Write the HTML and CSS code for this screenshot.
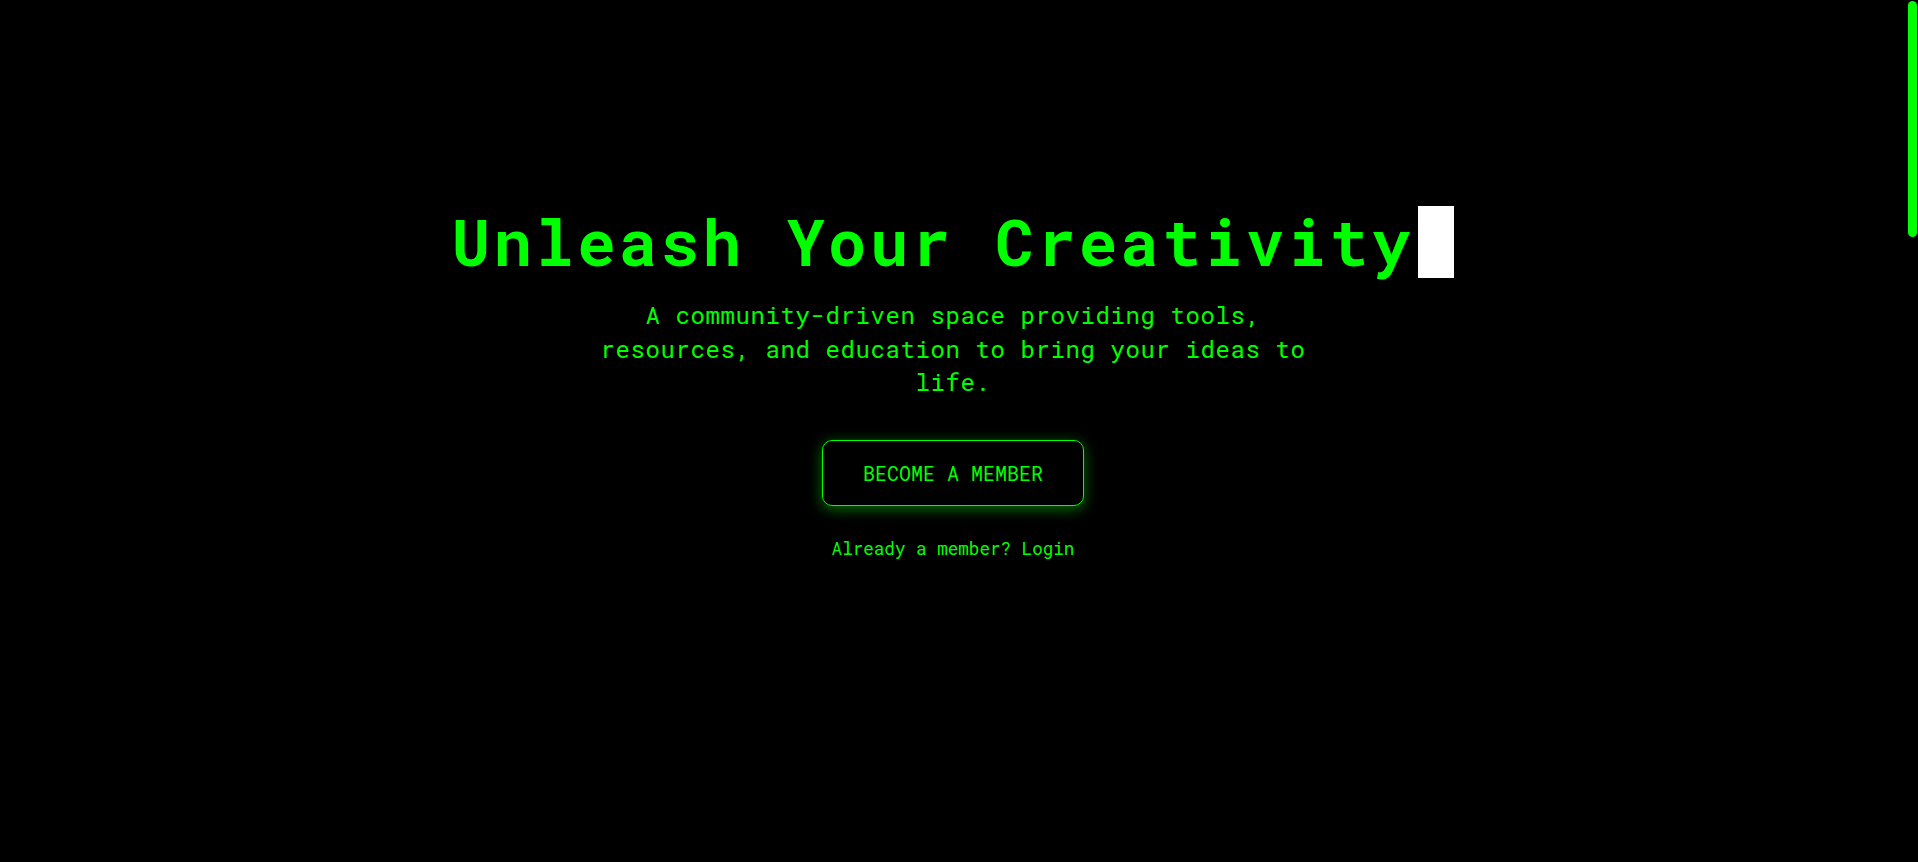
FILE: index.html
```html
<!DOCTYPE html>
<html lang="en">
<head>
<meta charset="utf-8">
<title>Unleash Your Creativity</title>
<link rel="stylesheet" href="styles.css">
</head>
<body>
<main class="page">
  <section class="hero">
    <h1 class="hero-title"><span class="hero-title-text">Unleash Your Creativity</span><span class="cursor"></span></h1>
    <p class="hero-sub">A community-driven space providing tools, resources, and education to bring your ideas to life.</p>
    <a class="cta" href="#join">BECOME A MEMBER</a>
    <a class="login" href="#login">Already a member? Login</a>
  </section>
  <section class="below"></section>
</main>
<div class="scrollbar" aria-hidden="true"><div class="scrollbar-thumb"></div></div>
</body>
</html>
```
FILE: styles.css
```css
html, body {
  margin: 0;
  padding: 0;
  background: #000;
}
html {
  scrollbar-width: none;
}
::-webkit-scrollbar {
  display: none;
}
body {
  font-family: "Roboto Mono", "DejaVu Sans Mono", monospace;
  color: #00ff00;
}
.page {
  display: flex;
  flex-direction: column;
  padding-right: 12px;
}
.hero {
  display: flex;
  flex-direction: column;
  align-items: center;
  text-align: center;
  padding-top: 201px;
}
.hero-title {
  margin: 0;
  font-size: 64px;
  line-height: 80px;
  font-weight: 700;
  letter-spacing: 3.4px;
  white-space: nowrap;
}
.cursor {
  display: inline-block;
  width: 36px;
  height: 72px;
  background: #fff;
  vertical-align: -12px;
  margin-left: 5px;
}
.hero-sub {
  margin: 18px 0 0;
  max-width: 730px;
  font-size: 24px;
  line-height: 33.6px;
  letter-spacing: 0.6px;
}
.cta {
  margin-top: 40px;
  display: inline-block;
  padding: 20px 40px;
  border: 1px solid #00ff00;
  border-radius: 10px;
  font-size: 20px;
  line-height: 24px;
  color: #00ff00;
  text-decoration: none;
  box-shadow: 0 3px 14px rgba(0, 255, 0, 0.45);
}
.login {
  margin-top: 31px;
  font-size: 17.6px;
  line-height: 24px;
  color: #00ff00;
  text-decoration: none;
}
.below {
  height: 2600px;
}
.scrollbar {
  position: fixed;
  top: 0;
  right: 0;
  width: 10px;
  height: 100vh;
  background: #000;
}
.scrollbar-thumb {
  margin: 1px 1px 0 0;
  height: 236px;
  background: #00ff00;
  border-radius: 5px;
}
```
